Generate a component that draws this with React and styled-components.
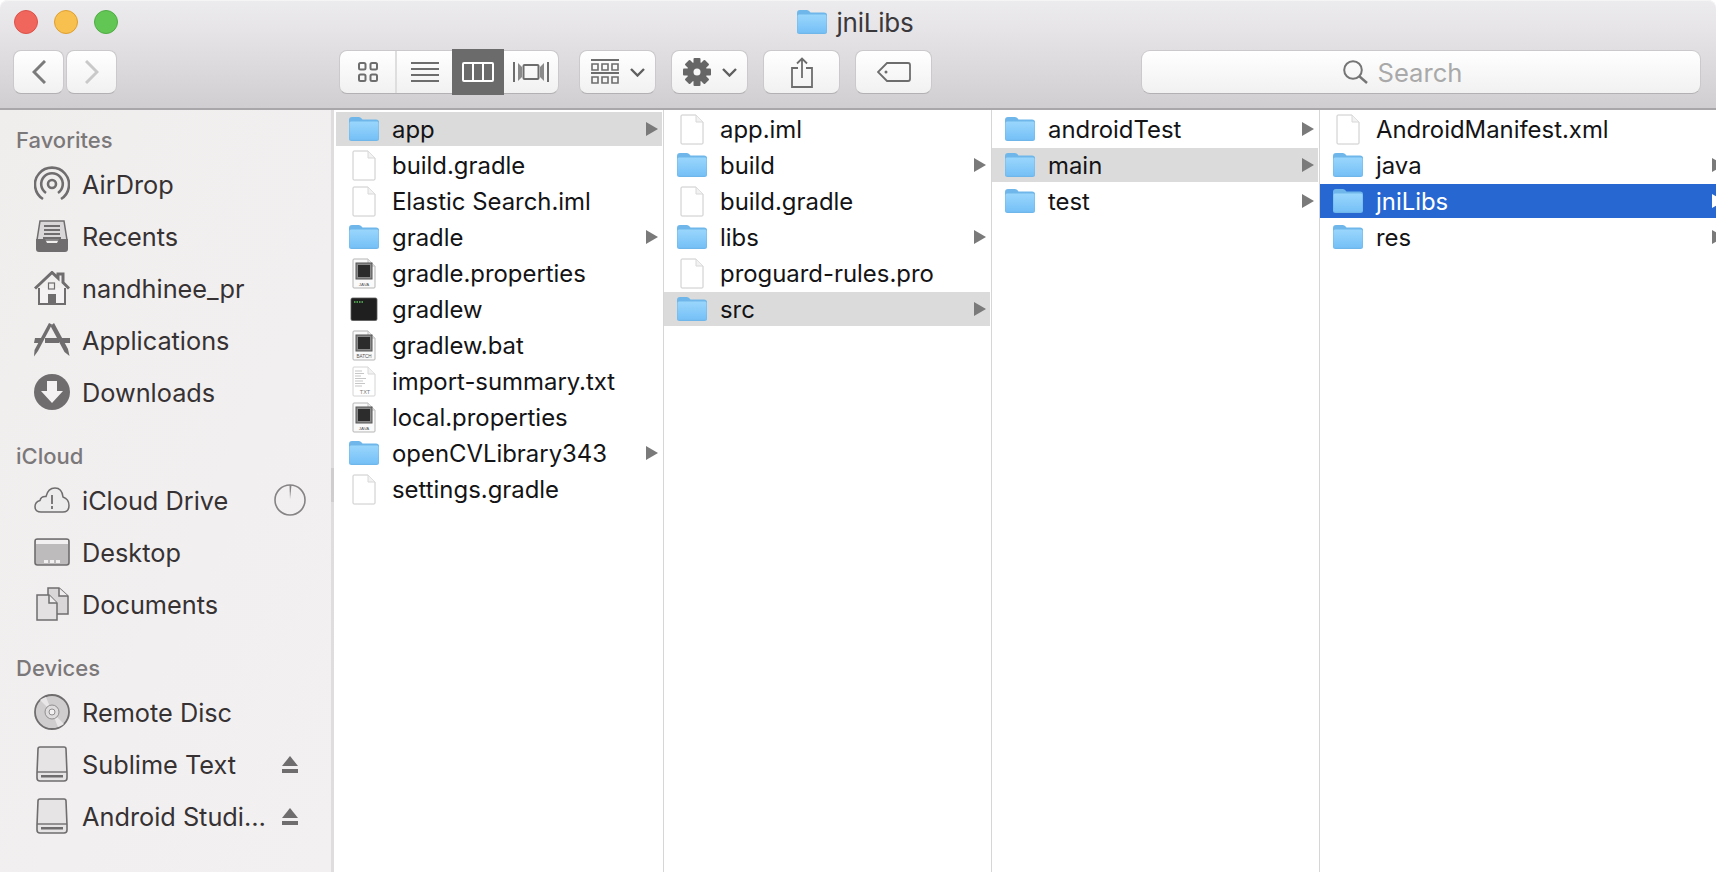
import styled, { createGlobalStyle } from "styled-components";

const GlobalStyle = createGlobalStyle`
  html, body {
    margin: 0;
    height: 100%;
    overflow: hidden;
    background: #fff;
  }
  #root {
    height: 100%;
  }
`;

const UI_FONT = `Inter, "Liberation Sans", sans-serif`;

const Window = styled.div`
  height: 872px;
  display: flex;
  flex-direction: column;
  overflow: hidden;
  font-family: ${UI_FONT};
  background: #fff;
`;

const Chrome = styled.header`
  flex: none;
  height: 110px;
  box-sizing: border-box;
  border-bottom: 2px solid #a9a7a9;
  border-radius: 8px 8px 0 0;
  background: linear-gradient(#ecebed 0%, #e7e5e8 25%, #d0ced0 100%);
  box-shadow: inset 0 1px 0 #f6f5f6;
`;

const TitleBar = styled.div`
  height: 50px;
  display: grid;
  grid-template-columns: 1fr auto 1fr;
  align-items: center;
  padding: 0 14px 6px;
  box-sizing: border-box;
`;

const Lights = styled.div`
  display: flex;
  gap: 16px;
`;

const Light = styled.span`
  width: 24px;
  height: 24px;
  box-sizing: border-box;
  border-radius: 50%;
  background: ${(p) => p.$fill};
  border: 1px solid ${(p) => p.$edge};
`;

const Title = styled.div`
  display: flex;
  align-items: center;
  gap: 9px;
  padding-right: 5px;
  font-size: 26px;
  color: #3a383b;
  letter-spacing: -0.2px;
`;

const ToolRow = styled.div`
  height: 44px;
  display: flex;
  align-items: stretch;
  padding: 0 15px 0 13px;
`;

const Group = styled.div`
  display: flex;
  margin-left: ${(p) => p.$left || 0}px;
`;

const ToolButton = styled.div`
  width: ${(p) => p.$w}px;
  box-sizing: border-box;
  margin-left: ${(p) => p.$left || 0}px;
  display: flex;
  align-items: center;
  justify-content: center;
  gap: ${(p) => p.$gap || 0}px;
  border-radius: 8px;
  border: 1px solid #cbc9cb;
  border-bottom-color: #b3b1b3;
  background: linear-gradient(#ffffff, #f1f1f1);
`;

const Segments = styled.div`
  display: flex;
  margin-left: 222px;
  width: 220px;
  box-sizing: border-box;
  border-radius: 8px;
  border: 1px solid #cbc9cb;
  border-bottom-color: #b3b1b3;
  background: linear-gradient(#ffffff, #f1f1f1);
`;

const Segment = styled.div`
  width: ${(p) => p.$w}px;
  box-sizing: border-box;
  display: flex;
  align-items: center;
  justify-content: center;
  margin: ${(p) => (p.$active ? "-2px 0" : "0")};
  background: ${(p) => (p.$active ? "#6b6b6b" : "transparent")};
  border-right: ${(p) => (p.$divider ? "2px solid #dedede" : "none")};
`;

const SearchBox = styled.div`
  margin-left: auto;
  width: 560px;
  box-sizing: border-box;
  padding-right: 37px;
  display: flex;
  align-items: center;
  justify-content: center;
  gap: 10px;
  border-radius: 9px;
  border: 1px solid #cbc9cb;
  border-bottom-color: #b3b1b3;
  background: linear-gradient(#ffffff, #f1f1f1);
  font-size: 25.6px;
  color: #a9a9a9;
`;

const Body = styled.div`
  flex: 1;
  min-height: 0;
  display: flex;
  overflow: hidden;
`;

const Sidebar = styled.aside`
  flex: none;
  width: 331px;
  box-sizing: border-box;
  padding-top: 11px;
  padding-right: 25px;
  overflow: hidden;
  background: linear-gradient(115deg, #f0eeed, #f2eff0 60%, #f3f0f1);
  color: #363233;
`;

const SectionHead = styled.div`
  height: 38px;
  margin-top: ${(p) => (p.$first ? 0 : 18)}px;
  display: flex;
  align-items: center;
  padding-left: 16px;
  font-size: 22px;
  font-weight: 500;
  color: #7b787a;
`;

const SideItem = styled.div`
  height: 52px;
  box-sizing: border-box;
  padding: 0 0 2px 34px;
  display: flex;
  align-items: center;
  font-size: 25.3px;
  white-space: nowrap;
`;

const SideIcon = styled.span`
  flex: none;
  width: 36px;
  height: 36px;
  margin-right: 12px;
  display: flex;
  align-items: center;
  justify-content: center;
`;

const SideBadge = styled.span`
  flex: none;
  width: 32px;
  margin-left: auto;
  display: flex;
  justify-content: center;
`;

const Splitter = styled.div`
  flex: none;
  width: 5px;
  box-sizing: border-box;
  border-left: 3px solid #dfdddd;
`;

const SplitGrip = styled.div`
  height: 34px;
  margin: 358px 0 0 -3px;
  width: 3px;
  background: #cfcdcd;
`;

const Column = styled.section`
  flex: none;
  width: ${(p) => p.$w || 328}px;
  box-sizing: border-box;
  padding: 2px 1px 0 0;
  border-right: 1px solid #d6d6d6;
`;

const rowBackground = { gray: "#dbdbdb", blue: "#2767d2" };

const Row = styled.div`
  height: 34px;
  margin-bottom: 2px;
  display: flex;
  align-items: center;
  padding: 0 4px 0 13px;
  font-size: 23.9px;
  white-space: nowrap;
  color: ${(p) => (p.$tone === "blue" ? "#fff" : "#141416")};
  background: ${(p) => rowBackground[p.$tone] || "transparent"};
`;

const FileIcon = styled.span`
  flex: none;
  width: 30px;
  height: 32px;
  margin-right: 13px;
  display: flex;
  align-items: center;
  justify-content: center;
`;

const Arrow = styled.span`
  width: 0;
  height: 0;
  margin-left: auto;
  border-style: solid;
  border-width: 7px 0 7px 12px;
  border-color: transparent transparent transparent
    ${(p) => (p.$tone === "blue" ? "#fff" : "#7a7a7a")};
`;

const gray = "#6f6d6e";

const Folder = () => (
  <svg width="30" height="24" viewBox="0 0 30 24">
    <defs>
      <linearGradient id="fold" x1="0" y1="0" x2="0" y2="1">
        <stop offset="0" stopColor="#9ad6fc" />
        <stop offset="1" stopColor="#75c0f7" />
      </linearGradient>
    </defs>
    <path d="M0 3Q0 0 3 0H10Q12 0 13.500 2.500H27Q30 2.500 30 5V21.500Q30 24 27.500 24H2.500Q0 24 0 21.500Z" fill="#6fb7ea" />
    <path d="M0.500 6Q0.500 4.500 2 4.500H28Q29.500 4.500 29.500 6V21.500Q29.500 22.800 28 22.800H2Q0.500 22.800 0.500 21.500Z" fill="url(#fold)" />
  </svg>
);

const pageShape = "M1 2Q1 1 2 1H16L23 8V29Q23 30 22 30H2Q1 30 1 29Z";

const Doc = () => (
  <svg width="24" height="31" viewBox="0 0 24 31">
    <path d={pageShape} fill="#fff" stroke="#cacaca" />
    <path d="M16 1V8H23" fill="#f2f2f2" stroke="#d8d8d8" />
  </svg>
);

const Exec = ({ label }) => (
  <svg width="24" height="31" viewBox="0 0 24 31">
    <path d={pageShape} fill="#fafafa" stroke="#b5b5b5" />
    <path d="M16 1V8H23" fill="#eee" stroke="#c4c4c4" />
    <rect x="4" y="5" width="16" height="16" fill="#8a8a8a" stroke="#555" />
    <rect x="6" y="7" width="12" height="12" fill="#2c2c2c" />
    <text x="12" y="27.500" fontSize={label.length > 4 ? 4.600 : 4.400} textAnchor="middle" fill="#555" fontFamily="Liberation Sans, sans-serif">
      {label}
    </text>
  </svg>
);

const Terminal = () => (
  <svg width="28" height="25" viewBox="0 0 28 25">
    <rect x="1" y="1" width="26" height="22.500" rx="1.500" fill="#1f1f1f" stroke="#5b5b5b" strokeWidth="0.800" />
    <path d="M4 5H5.500M6.500 5H8M9 5H10.500M11.500 5H13" stroke="#5fbf5f" strokeWidth="1.500" />
  </svg>
);

const TextDoc = () => (
  <svg width="24" height="31" viewBox="0 0 24 31">
    <path d={pageShape} fill="#fff" stroke="#d4d4d4" />
    <path d="M16 1V8H23" fill="#f2f2f2" stroke="#d8d8d8" />
    <path d="M3 5H10M3 7.500H12M3 10H9M3 12.500H14M3 15H11M3 17.500H13M3 20H10" stroke="#c6c6c6" strokeWidth="1.200" />
    <text x="13" y="28" fontSize="5.500" textAnchor="middle" fill="#777" fontFamily="Liberation Sans, sans-serif">
      TXT
    </text>
  </svg>
);

const AirDropIcon = () => (
  <svg width="36" height="36" viewBox="0 0 36 36" fill="none" stroke={gray} strokeWidth="2.600">
    <circle cx="18" cy="18" r="4" />
    <path d="M12 27A10.800 10.800 0 1 1 24 27" />
    <path d="M9 33A17 17 0 1 1 27 33" />
  </svg>
);

const RecentsIcon = () => (
  <svg width="32" height="32" viewBox="0 0 32 32">
    <path d="M4 1H28L31 20H1Z" fill="#d9d7d7" stroke={gray} strokeWidth="1.500" />
    <path d="M8 6H24M8 10H24M8 14H24M7 18H25" stroke={gray} strokeWidth="1.800" />
    <path d="M0 19H9L11 23H21L23 19H32V29Q32 32 29 32H3Q0 32 0 29Z" fill={gray} />
  </svg>
);

const HomeIcon = () => (
  <svg width="36" height="34" viewBox="0 0 36 34">
    <path d="M5 17V33H31V17" fill="#f4f2f2" stroke={gray} strokeWidth="2" />
    <path d="M1 17.500L18 1.500L24 7V3H29V11.500L35 17.500" fill="none" stroke={gray} strokeWidth="3" />
    <rect x="14.500" y="12" width="6" height="6" fill="none" stroke={gray} strokeWidth="1.200" />
    <rect x="14" y="23" width="8" height="10" fill={gray} />
  </svg>
);

const AppsIcon = () => (
  <svg width="36" height="34" viewBox="0 0 36 34" fill={gray}>
    <path d="M1 15H8V20H0ZM11 15H25V20H11ZM28 15H36V20H28Z" />
    <path d="M15 0L18 1.500L4 28L0 33.500L0.500 27Z" />
    <path d="M16.500 3L20 0L34 26L35.500 33L30.500 29Z" />
  </svg>
);

const DownloadIcon = () => (
  <svg width="36" height="36" viewBox="0 0 36 36">
    <circle cx="18" cy="18" r="18" fill={gray} />
    <path d="M13 7H23V17H29L18 29L7 17H13Z" fill="#f4f2f2" />
  </svg>
);

const CloudIcon = () => (
  <svg width="36" height="26" viewBox="0 0 36 26">
    <path d="M7 25Q1 25 1 19.500Q1 15 6 13.500Q7 9 12 9.500Q14 1 21 1Q28 1 29 10Q35 12 35 18.500Q35 25 29 25Z" fill="#ececec" stroke={gray} strokeWidth="1.500" />
    <path d="M18 8V17M18 19V22" stroke={gray} strokeWidth="1.800" />
  </svg>
);

const DesktopIcon = () => (
  <svg width="36" height="28" viewBox="0 0 36 28">
    <rect x="1" y="1" width="34" height="26" rx="2.500" fill="#bdbbbb" stroke={gray} strokeWidth="1.600" />
    <rect x="2" y="2" width="32" height="4" fill="#f2f0f0" />
    <path d="M10 22H14V25H10ZM16 22H20V25H16ZM22 22H26V25H22Z" fill="#f2f0f0" />
  </svg>
);

const DocumentsIcon = () => (
  <svg width="33" height="34" viewBox="0 0 33 34">
    <path d="M12 1H23L32 9V27H12Z" fill="#d9d7d7" stroke={gray} strokeWidth="1.500" />
    <path d="M23 1V9H32" fill="#efeded" stroke={gray} strokeWidth="1.500" />
    <path d="M1 8H13L21 16V33H1Z" fill="#e3e1e1" stroke={gray} strokeWidth="1.500" />
    <path d="M13 8V16H21" fill="#efeded" stroke={gray} strokeWidth="1.500" />
  </svg>
);

const DiscIcon = () => (
  <svg width="36" height="36" viewBox="0 0 36 36">
    <circle cx="18" cy="18" r="17" fill="#cfcdcd" stroke={gray} strokeWidth="1.800" />
    <path d="M18 18L6 6A17 17 0 0 1 12 3ZM18 18L30 30A17 17 0 0 1 24 33Z" fill="#e8e6e6" />
    <circle cx="18" cy="18" r="7" fill="#dedcdc" stroke="#8f8d8d" strokeWidth="1" />
    <circle cx="18" cy="18" r="3" fill="#f2f0f0" stroke="#8f8d8d" strokeWidth="1" />
  </svg>
);

const DriveIcon = () => (
  <svg width="32" height="36" viewBox="0 0 32 36">
    <path d="M4 1H28Q30 1 30 3L31 27V32Q31 35 28 35H4Q1 35 1 32V27L2 3Q2 1 4 1Z" fill="#e6e4e4" stroke={gray} strokeWidth="1.600" />
    <path d="M1 26H31" stroke={gray} strokeWidth="1.400" />
    <rect x="5" y="29" width="22" height="2.500" fill={gray} />
  </svg>
);

const PieIcon = () => (
  <svg width="32" height="32" viewBox="0 0 32 32">
    <circle cx="16" cy="16" r="15" fill="none" stroke="#858384" strokeWidth="1.600" />
    <path d="M15.500 1H17.500L16 15Z" fill="#858384" />
  </svg>
);

const EjectIcon = () => (
  <svg width="16" height="17" viewBox="0 0 16 17" fill={gray}>
    <path d="M8 0L16 10H0Z" />
    <rect y="13" width="16" height="4" />
  </svg>
);

const Chevron = ({ back, color }) => (
  <svg width="14" height="24" viewBox="0 0 14 24" fill="none" stroke={color} strokeWidth="3">
    <path d={back ? "M13 1L2 12L13 23" : "M1 1L12 12L1 23"} />
  </svg>
);

const Caret = () => (
  <svg width="15" height="9" viewBox="0 0 15 9" fill="none" stroke="#5f5f5f" strokeWidth="2.400">
    <path d="M1 1L7.500 7.500L14 1" />
  </svg>
);

const IconViewIcon = () => (
  <svg width="20" height="20" viewBox="0 0 20 20" fill="none" stroke="#6d6d6d" strokeWidth="2">
    <rect x="1" y="1" width="6.500" height="6.500" rx="1.500" />
    <rect x="12.500" y="1" width="6.500" height="6.500" rx="1.500" />
    <rect x="1" y="12.500" width="6.500" height="6.500" rx="1.500" />
    <rect x="12.500" y="12.500" width="6.500" height="6.500" rx="1.500" />
  </svg>
);

const ListViewIcon = () => (
  <svg width="28" height="20" viewBox="0 0 28 20" stroke="#6d6d6d" strokeWidth="2">
    <path d="M0 1H28M0 7H28M0 13H28M0 19H28" />
  </svg>
);

const ColumnViewIcon = () => (
  <svg width="32" height="20" viewBox="0 0 32 20" fill="none" stroke="#fff" strokeWidth="2">
    <rect x="1" y="1" width="30" height="18" rx="1" />
    <path d="M11 1V19M21 1V19" />
  </svg>
);

const CoverViewIcon = () => (
  <svg width="36" height="20" viewBox="0 0 36 20" fill="none" stroke="#6d6d6d">
    <rect x="10.500" y="3" width="15" height="14" rx="1" strokeWidth="2" />
    <path d="M1 0V20M35 0V20" strokeWidth="2" />
    <path d="M5 1V19L9 15V5ZM31 1V19L27 15V5Z" fill="#8a8a8a" stroke="none" />
  </svg>
);

const ArrangeIcon = () => (
  <svg width="28" height="26" viewBox="0 0 28 26" stroke="#6d6d6d" fill="none">
    <path d="M0 1H28M0 14H28" strokeWidth="1.800" />
    <path d="M1 5H7V11H1ZM11 5H17V11H11ZM21 5H27V11H21ZM1 18H7V24H1ZM11 18H17V24H11ZM21 18H27V24H21Z" strokeWidth="1.600" />
  </svg>
);

const GearIcon = () => (
  <svg width="28" height="28" viewBox="0 0 28 28">
    <g fill="#666">
      {[0, 45, 90, 135].map((a) => (
        <rect key={a} x="10.500" y="0" width="7" height="28" rx="1" transform={`rotate(${a} 14 14)`} />
      ))}
      <circle cx="14" cy="14" r="10" />
    </g>
    <circle cx="14" cy="14" r="3.500" fill="#f6f6f6" />
  </svg>
);

const ShareIcon = () => (
  <svg width="22" height="31" viewBox="0 0 22 31" fill="none" stroke="#6d6d6d" strokeWidth="1.800">
    <path d="M7 11H1V30H21V11H15" />
    <path d="M11 21V1.500M6 6.500L11 1.500L16 6.500" />
  </svg>
);

const TagIcon = () => (
  <svg width="34" height="20" viewBox="0 0 34 20" fill="none" stroke="#6d6d6d" strokeWidth="1.800">
    <path d="M10 1H31Q33 1 33 3V17Q33 19 31 19H10L1 10Z" />
    <circle cx="9" cy="10" r="1.500" fill="#6d6d6d" stroke="none" />
  </svg>
);

const SearchIcon = () => (
  <svg width="25" height="24" viewBox="0 0 25 24" fill="none" stroke="#757575">
    <circle cx="10" cy="10" r="8.800" strokeWidth="2" />
    <path d="M16 16L24 23" strokeWidth="2.400" />
  </svg>
);

const fileIcons = {
  folder: <Folder />,
  doc: <Doc />,
  java: <Exec label="JAVA" />,
  batch: <Exec label="BATCH" />,
  term: <Terminal />,
  text: <TextDoc />,
};

const columns = [
  [
    { name: "app", kind: "folder", tone: "gray" },
    { name: "build.gradle", kind: "doc" },
    { name: "Elastic Search.iml", kind: "doc" },
    { name: "gradle", kind: "folder" },
    { name: "gradle.properties", kind: "java" },
    { name: "gradlew", kind: "term" },
    { name: "gradlew.bat", kind: "batch" },
    { name: "import-summary.txt", kind: "text" },
    { name: "local.properties", kind: "java" },
    { name: "openCVLibrary343", kind: "folder" },
    { name: "settings.gradle", kind: "doc" },
  ],
  [
    { name: "app.iml", kind: "doc" },
    { name: "build", kind: "folder" },
    { name: "build.gradle", kind: "doc" },
    { name: "libs", kind: "folder" },
    { name: "proguard-rules.pro", kind: "doc" },
    { name: "src", kind: "folder", tone: "gray" },
  ],
  [
    { name: "androidTest", kind: "folder" },
    { name: "main", kind: "folder", tone: "gray" },
    { name: "test", kind: "folder" },
  ],
  [
    { name: "AndroidManifest.xml", kind: "doc" },
    { name: "java", kind: "folder" },
    { name: "jniLibs", kind: "folder", tone: "blue" },
    { name: "res", kind: "folder" },
  ],
];

const sidebar = [
  {
    head: "Favorites",
    items: [
      { name: "AirDrop", icon: <AirDropIcon /> },
      { name: "Recents", icon: <RecentsIcon /> },
      { name: "nandhinee_pr", icon: <HomeIcon /> },
      { name: "Applications", icon: <AppsIcon /> },
      { name: "Downloads", icon: <DownloadIcon /> },
    ],
  },
  {
    head: "iCloud",
    items: [
      { name: "iCloud Drive", icon: <CloudIcon />, badge: <PieIcon /> },
      { name: "Desktop", icon: <DesktopIcon /> },
      { name: "Documents", icon: <DocumentsIcon /> },
    ],
  },
  {
    head: "Devices",
    items: [
      { name: "Remote Disc", icon: <DiscIcon /> },
      { name: "Sublime Text", icon: <DriveIcon />, badge: <EjectIcon /> },
      { name: "Android Studi…", icon: <DriveIcon />, badge: <EjectIcon /> },
    ],
  },
  { head: "Shared", items: [] },
];

const App = () => {
  return (
    <Window>
      <GlobalStyle />
      <Chrome>
        <TitleBar>
          <Lights>
            <Light $fill="#f1665c" $edge="#dc5148" />
            <Light $fill="#f8c04e" $edge="#df9f30" />
            <Light $fill="#62c655" $edge="#4fac43" />
          </Lights>
          <Title>
            <Folder />
            jniLibs
          </Title>
        </TitleBar>
        <ToolRow>
          <Group>
            <ToolButton $w={51}>
              <Chevron back color="#7b7b7b" />
            </ToolButton>
            <ToolButton $w={51} $left={2}>
              <Chevron color="#c9c9c9" />
            </ToolButton>
          </Group>
          <Segments>
            <Segment $w={57} $divider>
              <IconViewIcon />
            </Segment>
            <Segment $w={55}>
              <ListViewIcon />
            </Segment>
            <Segment $w={52} $active>
              <ColumnViewIcon />
            </Segment>
            <Segment $w={54}>
              <CoverViewIcon />
            </Segment>
          </Segments>
          <ToolButton $w={77} $left={20} $gap={11}>
            <ArrangeIcon />
            <Caret />
          </ToolButton>
          <ToolButton $w={77} $left={15} $gap={11}>
            <GearIcon />
            <Caret />
          </ToolButton>
          <ToolButton $w={77} $left={15}>
            <ShareIcon />
          </ToolButton>
          <ToolButton $w={77} $left={15}>
            <TagIcon />
          </ToolButton>
          <SearchBox>
            <SearchIcon />
            Search
          </SearchBox>
        </ToolRow>
      </Chrome>
      <Body>
        <Sidebar>
          {sidebar.map((section, i) => (
            <div key={section.head}>
              <SectionHead $first={i === 0}>{section.head}</SectionHead>
              {section.items.map((item) => (
                <SideItem key={item.name}>
                  <SideIcon>{item.icon}</SideIcon>
                  {item.name}
                  {item.badge && <SideBadge>{item.badge}</SideBadge>}
                </SideItem>
              ))}
            </div>
          ))}
        </Sidebar>
        <Splitter>
          <SplitGrip />
        </Splitter>
        {columns.map((rows, i) => (
          <Column key={i} $w={i === 3 ? 410 : 328}>
            {rows.map((row) => (
              <Row key={row.name} $tone={row.tone}>
                <FileIcon>{fileIcons[row.kind]}</FileIcon>
                {row.name}
                {row.kind === "folder" && <Arrow $tone={row.tone} />}
              </Row>
            ))}
          </Column>
        ))}
      </Body>
    </Window>
  );
};

export default App;
